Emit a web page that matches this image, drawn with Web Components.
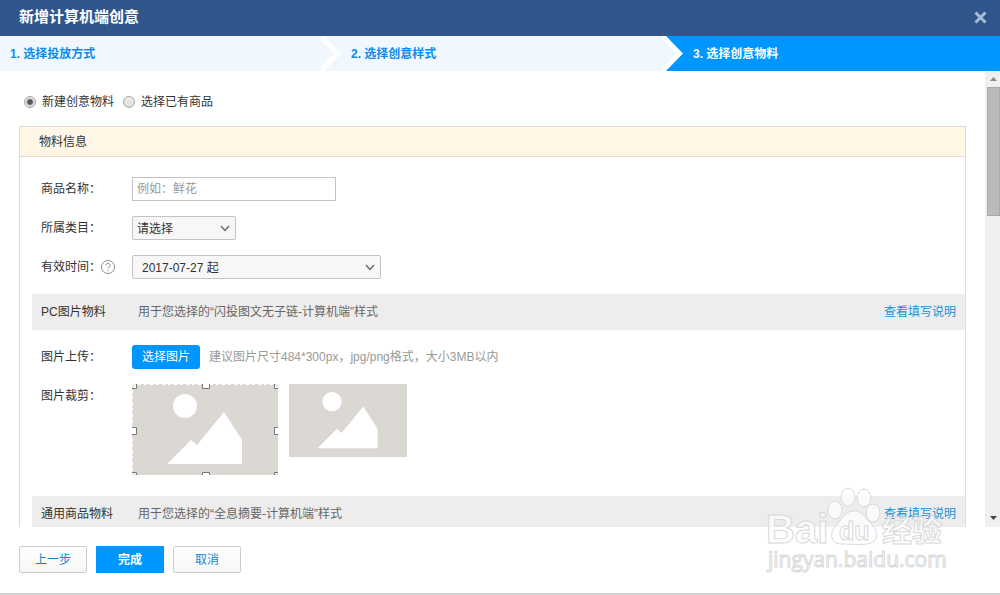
<!DOCTYPE html>
<html lang="zh-CN">
<head>
<meta charset="utf-8">
<meta name="viewport" content="width=device-width, initial-scale=1">
<title>新增计算机端创意</title>
<style>
  body {
    margin: 0;
    background: #fff;
    color: #333;
    font: 12px/24px "Liberation Sans", "Noto Sans CJK SC", sans-serif;
  }
</style>
</head>
<body>

<creative-dialog heading="新增计算机端创意">
  <step-bar slot="steps">
    <step-item number="1">选择投放方式</step-item>
    <step-item number="2" before-active>选择创意样式</step-item>
    <step-item number="3" active>选择创意物料</step-item>
  </step-bar>

  <source-choice></source-choice>

  <form-panel heading="物料信息">
    <form-row label="商品名称：">
      <text-field label="商品名称" placeholder="例如：鲜花"></text-field>
    </form-row>
    <form-row label="所属类目：">
      <select-field label="所属类目" value="请选择" size="small"></select-field>
    </form-row>
    <form-row label="有效时间：" help>
      <select-field label="有效时间" value="2017-07-27 起" size="large"></select-field>
    </form-row>
    <section-bar heading="PC图片物料" link="查看填写说明">用于您选择的“闪投图文无子链-计算机端”样式</section-bar>
    <form-row label="图片上传：">
      <action-button kind="upload">选择图片</action-button>
      <hint-text>建议图片尺寸484*300px，jpg/png格式，大小3MB以内</hint-text>
    </form-row>
    <form-row label="图片裁剪：" last>
      <image-placeholder crop></image-placeholder>
      <image-placeholder></image-placeholder>
    </form-row>
    <section-bar heading="通用商品物料" link="查看填写说明">用于您选择的“全息摘要-计算机端”样式</section-bar>
  </form-panel>

  <action-button slot="actions">上一步</action-button>
  <action-button slot="actions" kind="primary">完成</action-button>
  <action-button slot="actions">取消</action-button>
</creative-dialog>
<site-watermark></site-watermark>

<script>
// every element below renders one template into an open shadow root
class BaseElement extends HTMLElement {
  constructor() {
    super();
    this._shadowRoot = this.attachShadow({ mode: 'open' });
  }

  connectedCallback() {
    this._shadowRoot.innerHTML = this.template();
  }

  attr(name) {
    return this.getAttribute(name) || '';
  }
}

class CreativeDialog extends BaseElement {
  template() {
    return `
      <style>
        :host {
          display: flex;
          flex-direction: column;
          height: 100vh;
          box-sizing: border-box;
          border-bottom: 2px solid #d2d2d2;
        }
        header {
          display: flex;
          align-items: center;
          justify-content: space-between;
          height: 34px;
          padding: 0 13px 2px 19px;
          background: #31568c;
          color: #fff;
        }
        h1 {
          margin: 0;
          font-size: 15px;
          line-height: 34px;
        }
        .close {
          display: flex;
          padding: 0;
          border: 0;
          background: none;
          cursor: pointer;
        }
        .body {
          display: flex;
          flex: 1;
          min-height: 0;
        }
        .content {
          flex: 1;
          overflow: hidden;
          padding: 19px 19px 0;
        }
        footer {
          display: flex;
          gap: 9px;
          padding: 19px 19px 20px;
        }
      </style>
      <header>
        <h1>${this.attr('heading')}</h1>
        <button class="close" aria-label="关闭">
          <svg width="13" height="13" viewBox="0 0 13 13" stroke="#a9bad3" stroke-width="3"><path d="M1.500 1.500L11.500 11.500M11.500 1.500L1.500 11.500"/></svg>
        </button>
      </header>
      <slot name="steps"></slot>
      <div class="body">
        <div class="content"><slot></slot></div>
        <scroll-rail></scroll-rail>
      </div>
      <footer><slot name="actions"></slot></footer>
    `;
  }
}

class StepBar extends BaseElement {
  template() {
    return `
      <style>
        :host {
          display: grid;
          grid-template-columns: 341fr 342fr 317fr;
          grid-template-rows: 35px;
        }
      </style>
      <slot></slot>
    `;
  }
}

class StepItem extends BaseElement {
  template() {
    const next = this.hasAttribute('before-active') ? '#0096ff' : '#f0f7ff';
    const arrow = `
      <svg width="20" height="35" viewBox="0 0 20 35">
        <path fill="${next}" d="M0 0H20V35H0Z"/>
        <path fill="#fff" d="M0 0H3L20 17.500L3 35H0Z"/>
        <path fill="#f0f7ff" d="M-4 0L13 17.500L-4 35Z"/>
      </svg>`;

    return `
      <style>
        :host {
          display: flex;
          justify-content: space-between;
          padding-left: 10px;
          background: #f0f7ff;
          color: #0a8cf0;
          font-weight: bold;
          line-height: 36px;
        }
        :host([active]) {
          background: #0096ff;
          color: #fff;
        }
      </style>
      <span>${this.attr('number')}. <slot></slot></span>
      ${this.hasAttribute('active') ? '' : arrow}
    `;
  }
}

class SourceChoice extends BaseElement {
  template() {
    return `
      <style>
        :host {
          display: flex;
          gap: 9px;
          padding-left: 5px;
          margin-bottom: 12px;
        }
        label {
          display: flex;
          align-items: center;
          gap: 6px;
        }
        input {
          appearance: none;
          width: 12px;
          height: 12px;
          margin: 0;
          border: 1px solid #a5a5a5;
          border-radius: 50%;
          background: linear-gradient(#eee, #ddd);
        }
        input:checked {
          background: radial-gradient(circle, #555 0 2px, #e8e8e8 4px);
        }
      </style>
      <label><input type="radio" name="source" checked>新建创意物料</label>
      <label><input type="radio" name="source">选择已有商品</label>
    `;
  }
}

class FormPanel extends BaseElement {
  template() {
    return `
      <style>
        :host {
          display: block;
          border: 1px solid #dfdcd0;
        }
        h2 {
          margin: 0 0 20px;
          padding: 2px 0 0 19px;
          border-bottom: 1px solid #e3dccb;
          background: #fff6e5;
          font-size: 12px;
          font-weight: normal;
          line-height: 27px;
        }
        .rows {
          display: flex;
          flex-direction: column;
          gap: 15px;
          padding-left: 12px;
        }
      </style>
      <h2>${this.attr('heading')}</h2>
      <div class="rows"><slot></slot></div>
    `;
  }
}

class FormRow extends BaseElement {
  template() {
    const help = `
      <svg width="14" height="14" viewBox="0 0 14 14" fill="none" stroke="#8c8c8c">
        <circle cx="7" cy="7" r="6.500"/>
        <path d="M4.800 5.400C4.800 2.600 9.200 2.600 9.200 5.300C9.200 6.900 7 6.900 7 8.800M7 10V11.200"/>
      </svg>`;

    return `
      <style>
        :host {
          display: flex;
          gap: 9px;
          padding-left: 9px;
        }
        :host([last]) {
          padding-bottom: 6px;
        }
        .label {
          display: flex;
          align-items: center;
          width: 82px;
          height: 24px;
          white-space: nowrap;
        }
      </style>
      <span class="label">${this.attr('label')}${this.hasAttribute('help') ? help : ''}</span>
      <slot></slot>
    `;
  }
}

class TextField extends BaseElement {
  template() {
    return `
      <style>
        :host {
          display: flex;
        }
        input {
          box-sizing: border-box;
          width: 204px;
          height: 24px;
          padding: 0 4px;
          border: 1px solid #c3c3c3;
          background: #fff;
          font: inherit;
        }
        input::placeholder {
          color: #999;
        }
      </style>
      <input type="text" aria-label="${this.attr('label')}" placeholder="${this.attr('placeholder')}">
    `;
  }
}

class SelectField extends BaseElement {
  template() {
    return `
      <style>
        :host {
          display: grid;
          align-items: center;
          width: 104px;
        }
        :host([size="large"]) {
          width: 249px;
        }
        select, svg {
          grid-area: 1 / 1;
        }
        select {
          appearance: none;
          box-sizing: border-box;
          width: 100%;
          height: 24px;
          padding: 0 4px;
          border: 1px solid #c3c3c3;
          border-radius: 2px;
          background: #f7f7f7;
          color: inherit;
          font: inherit;
        }
        :host([size="large"]) select {
          padding-left: 9px;
        }
        svg {
          justify-self: end;
          margin-right: 6px;
          pointer-events: none;
        }
      </style>
      <select aria-label="${this.attr('label')}"><option>${this.attr('value')}</option></select>
      <svg width="10" height="7" viewBox="0 0 10 7" fill="none" stroke="#666" stroke-width="1.300"><path d="M1 1L5 5.500L9 1"/></svg>
    `;
  }
}

class SectionBar extends BaseElement {
  template() {
    return `
      <style>
        :host {
          display: flex;
          height: 35px;
          padding: 1px 9px 0;
          background: #ededed;
          line-height: 35px;
        }
        h3 {
          width: 97px;
          margin: 0;
          font-size: 12px;
          font-weight: normal;
        }
        p {
          flex: 1;
          margin: 0;
          color: #666;
        }
        a {
          color: #1991d6;
          text-decoration: none;
        }
      </style>
      <h3>${this.attr('heading')}</h3>
      <p><slot></slot></p>
      <a href="#">${this.attr('link')}</a>
    `;
  }
}

class HintText extends BaseElement {
  template() {
    return `
      <style>
        :host {
          display: block;
          color: #999;
        }
      </style>
      <slot></slot>
    `;
  }
}

class ActionButton extends BaseElement {
  template() {
    return `
      <style>
        :host {
          display: block;
        }
        button {
          box-sizing: border-box;
          width: 68px;
          height: 27px;
          padding: 0;
          border: 1px solid #ccc;
          border-radius: 2px;
          background: linear-gradient(#fff, #f7f7f7);
          color: #1585cf;
          font: inherit;
          cursor: pointer;
        }
        :host([kind]) button {
          border: 0;
          background: #0096ff;
          color: #fff;
        }
        :host([kind="primary"]) button {
          border-radius: 0;
          font-weight: bold;
        }
        :host([kind="upload"]) button {
          display: block;
          height: 24px;
          border-radius: 3px;
        }
      </style>
      <button type="button"><slot></slot></button>
    `;
  }
}

class ImagePlaceholder extends BaseElement {
  template() {
    // dashed selection edge with its eight resize handles
    const handles = `
      <g fill="none" stroke="#fff" stroke-dasharray="3 3">
        <path d="M0 .5H146M.5 0V91"/>
      </g>
      <g fill="#fff" stroke="#777">
        <path d="M0 4.500H4.500V0M70.500 0V4.500H77.500V0M142.500 0V4.500H146"/>
        <path d="M0 43.500H4.500V50.500H0M146 43.500H142.500V50.500H146"/>
        <path d="M0 88.500H4.500V91M70.500 91V88.500H77.500V91M142.500 91V88.500H146"/>
      </g>`;

    return `
      <style>
        :host {
          display: block;
        }
        svg {
          display: block;
          width: 118px;
          height: 73px;
          margin-left: 2px;
          background: #dbd8d4;
        }
        :host([crop]) svg {
          width: 146px;
          height: 91px;
          margin: 0;
        }
      </style>
      <svg viewBox="0 0 146 91" role="img" aria-label="图片">
        <circle cx="53" cy="22" r="12" fill="#fff"/>
        <path fill="#fff" d="M35 80L59 56L65 61L92 28L110 56V80Z"/>
        ${this.hasAttribute('crop') ? handles : ''}
      </svg>
    `;
  }
}

class ScrollRail extends BaseElement {
  template() {
    return `
      <style>
        :host {
          display: flex;
          flex-direction: column;
          width: 13px;
          padding-left: 2px;
          background: #f0f0f0;
        }
        .thumb {
          box-sizing: border-box;
          height: 129px;
          border: 1px solid #a8a8a8;
          background: #bbb;
        }
        .track {
          flex: 1;
        }
        svg {
          display: block;
        }
      </style>
      <svg width="13" height="16" viewBox="0 0 13 16"><path fill="#8a8a8a" d="M3 10L6.500 6L10 10Z"/></svg>
      <div class="thumb"></div>
      <div class="track"></div>
      <svg width="13" height="16" viewBox="0 0 13 16"><path fill="#444" d="M3 5L6.500 9L10 5Z"/></svg>
    `;
  }
}

class SiteWatermark extends BaseElement {
  template() {
    return `
      <style>
        :host {
          position: absolute;
          right: 50px;
          bottom: 18px;
          pointer-events: none;
        }
        svg {
          display: block;
          font-family: "Liberation Sans", "Noto Sans CJK SC", sans-serif;
        }
        .url {
          font-family: "Open Sans", "Noto Sans", sans-serif;
        }
      </style>
      <svg width="186" height="94" viewBox="0 0 186 94" fill="#fff" fill-opacity=".7" stroke="#d8d8d8">
        <ellipse cx="71" cy="27" rx="7" ry="9"/>
        <ellipse cx="84" cy="14" rx="7" ry="9"/>
        <ellipse cx="100" cy="15" rx="7" ry="9"/>
        <ellipse cx="109" cy="30" rx="7" ry="9"/>
        <path d="M90 28C100 28 102 36 108 42C116 50 113 60 103 61C97 62 84 61 78 61C67 61 65 51 71 44C77 38 80 28 90 28Z"/>
        <text x="2" y="60" font-size="40" font-weight="bold">Bai</text>
        <text x="75" y="57" font-size="25" font-weight="bold">du</text>
        <text x="118" y="58" font-size="30" font-weight="bold">经验</text>
        <text class="url" x="4" y="84" font-size="21">jingyan.baidu.com</text>
      </svg>
    `;
  }
}

window.customElements.define('creative-dialog', CreativeDialog);
window.customElements.define('step-bar', StepBar);
window.customElements.define('step-item', StepItem);
window.customElements.define('source-choice', SourceChoice);
window.customElements.define('form-panel', FormPanel);
window.customElements.define('form-row', FormRow);
window.customElements.define('text-field', TextField);
window.customElements.define('select-field', SelectField);
window.customElements.define('section-bar', SectionBar);
window.customElements.define('hint-text', HintText);
window.customElements.define('action-button', ActionButton);
window.customElements.define('image-placeholder', ImagePlaceholder);
window.customElements.define('scroll-rail', ScrollRail);
window.customElements.define('site-watermark', SiteWatermark);
</script>
</body>
</html>
